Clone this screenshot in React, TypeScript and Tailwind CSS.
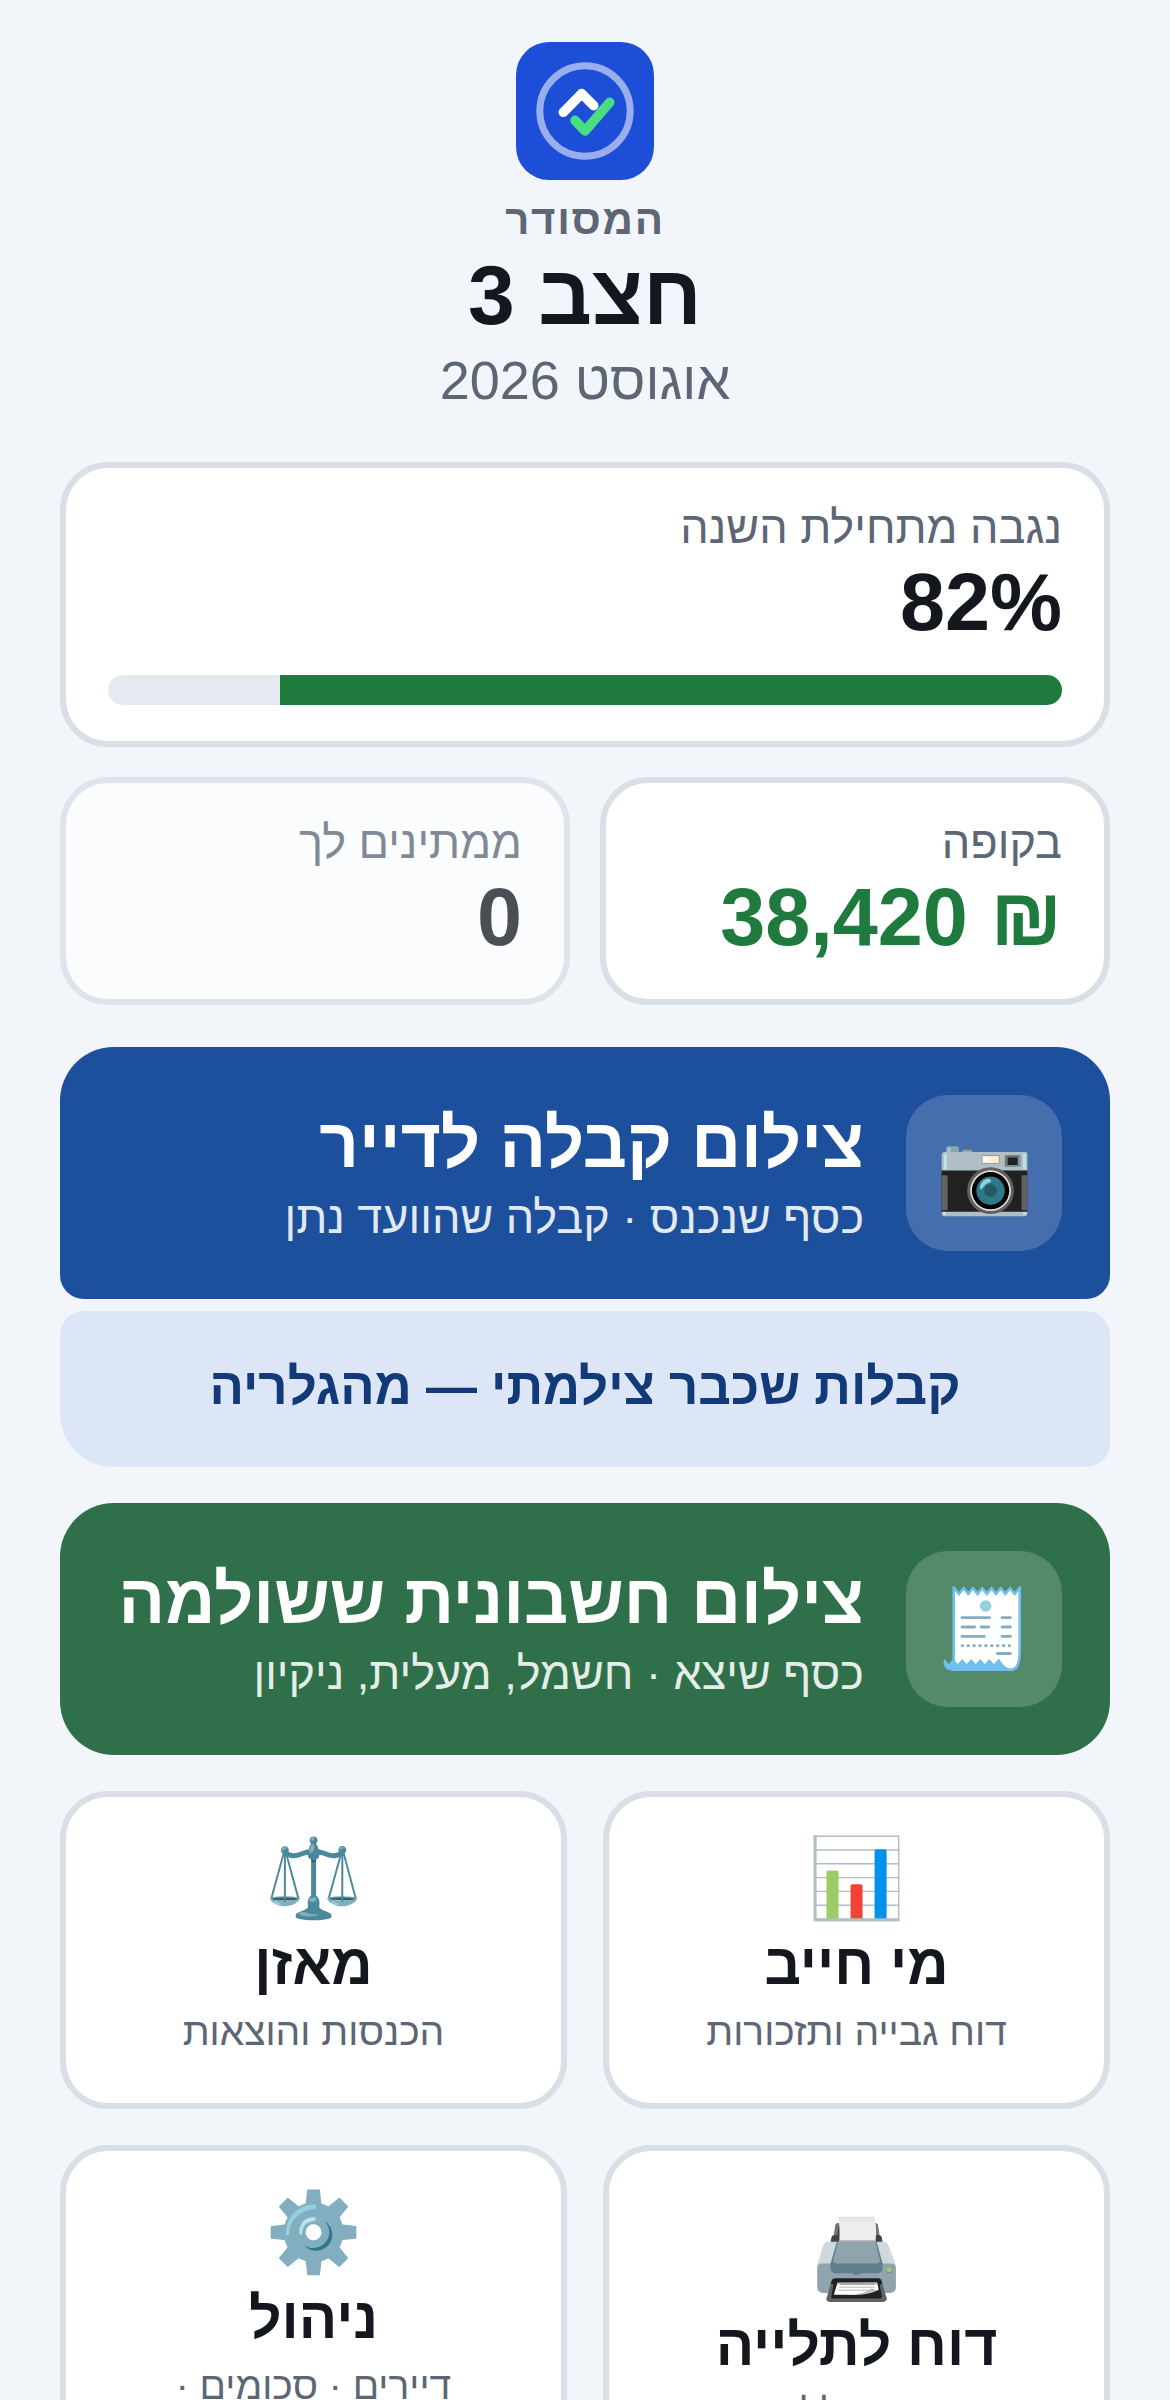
import type { ReactNode } from 'react';

function Logo() {
  return (
    <svg viewBox="0 0 138 138" className="size-[138px]" role="img" aria-label="המסודר" fill="none" strokeLinecap="round" strokeLinejoin="round">
      <rect width="138" height="138" rx="33" fill="#1d4ed8" />
      <circle cx="69" cy="69" r="45.2" stroke="#fff" strokeOpacity="0.55" strokeWidth="6.9" />
      <path d="M47.3 70.3 65.7 51.6 77.7 63.7" stroke="#fff" strokeWidth="9.6" />
      <path d="M59 78.4 69 89 93.7 60.4" stroke="#4ade80" strokeWidth="9.6" />
    </svg>
  );
}

function Stat({ label, value, green, muted, children }: { label: string; value: string; green?: boolean; muted?: boolean; children?: ReactNode }) {
  return (
    <section className={`rounded-[48px] border-6 border-[#dadee7] bg-white px-[42px] py-9 ${muted ? 'opacity-75' : ''}`}>
      <p className="text-[45px] leading-[48px] text-[#5c6675]">{label}</p>
      <p className={`mt-1 text-[81px] leading-[92px] font-bold ${green ? 'text-[#1f7a3d]' : 'text-[#14181e]'}`}>{value}</p>
      {children}
    </section>
  );
}

function Action({ icon, title, note, shape }: { icon: string; title: string; note: string; shape: string }) {
  return (
    <button type="button" className={`flex w-full items-center gap-[42px] p-12 text-start text-white ${shape}`}>
      <span aria-hidden="true" className="flex size-[156px] shrink-0 items-center justify-center rounded-[42px] bg-white/18 text-[78px] leading-[78px]">
        {icon}
      </span>
      <span className="flex flex-col gap-[6px] pt-px">
        <span className="text-[69px] leading-[82px] font-bold">{title}</span>
        <span className="text-[45px] leading-[54px] opacity-88">{note}</span>
      </span>
    </button>
  );
}

const tiles = [
  { icon: '📊', title: 'מי חייב', note: 'דוח גבייה ותזכורות' },
  { icon: '⚖️', title: 'מאזן', note: 'הכנסות והוצאות' },
  { icon: '🖨️', title: 'דוח לתלייה', note: 'תמונה ללובי' },
  { icon: '⚙️', title: 'ניהול', note: 'דיירים · סכומים · הגדרות' },
];

export default function App() {
  return (
    <div dir="rtl" className="min-h-screen bg-[#f2f5fa] px-[60px] pt-[42px] pb-[60px] font-['Liberation_Sans',Arial,sans-serif]">
      <header className="mb-[49px] flex flex-col items-center text-center">
        <Logo />
        <p className="mt-4 text-[42px] leading-[48px] font-bold tracking-[0.04em] text-[#5c6675]">המסודר</p>
        <h1 className="mt-[5px] text-[84px] leading-[92px] font-bold text-[#14181e]">חצב 3</h1>
        <p className="mt-[6px] text-[54px] leading-[66px] text-[#5c6675]">אוגוסט 2026</p>
      </header>

      <main>
        <Stat label="נגבה מתחילת השנה" value="82%">
          <div role="progressbar" aria-label="נגבה מתחילת השנה" aria-valuenow={82} aria-valuemin={0} aria-valuemax={100} className="mt-[27px] h-[30px] overflow-hidden rounded-full bg-[#e5eaf1]">
            <div className="h-full w-[82%] bg-[#1f7a3d]" />
          </div>
        </Stat>

        <div className="mt-[30px] grid grid-cols-2 gap-[30px]">
          <Stat label="בקופה" value="₪ 38,420" green />
          <Stat label="ממתינים לך" value="0" muted />
        </div>

        <div className="mt-[42px] flex flex-col gap-3">
          <Action icon="📷" title="צילום קבלה לדייר" note="כסף שנכנס · קבלה שהוועד נתן" shape="rounded-t-[54px] rounded-b-[24px] bg-[#1c4f9c]" />
          <button type="button" className="w-full rounded-[24px] rounded-bl-[54px] bg-[#dde6f7] px-12 pt-[46px] pb-[50px] text-[51px] leading-[60px] font-bold text-[#123a78]">
            קבלות שכבר צילמתי — מהגלריה
          </button>
        </div>

        <div className="mt-9">
          <Action icon="🧾" title="צילום חשבונית ששולמה" note="כסף שיצא · חשמל, מעלית, ניקיון" shape="rounded-[54px] bg-[#2f704a]" />
        </div>

        <nav className="mt-9 grid grid-cols-2 gap-9">
          {tiles.map((t) => (
            <button key={t.title} type="button" className="flex flex-col items-center justify-center rounded-[48px] border-6 border-[#dadee7] bg-white px-12 pt-[42px] pb-11 text-center">
              <span aria-hidden="true" className="text-[78px] leading-[78px]">{t.icon}</span>
              <span className="mt-2 text-[57px] leading-[78px] font-bold text-[#14181e]">{t.title}</span>
              <span className="mt-[2px] text-[39px] leading-[54px] text-[#5c6675]">{t.note}</span>
            </button>
          ))}
        </nav>
      </main>
    </div>
  );
}
